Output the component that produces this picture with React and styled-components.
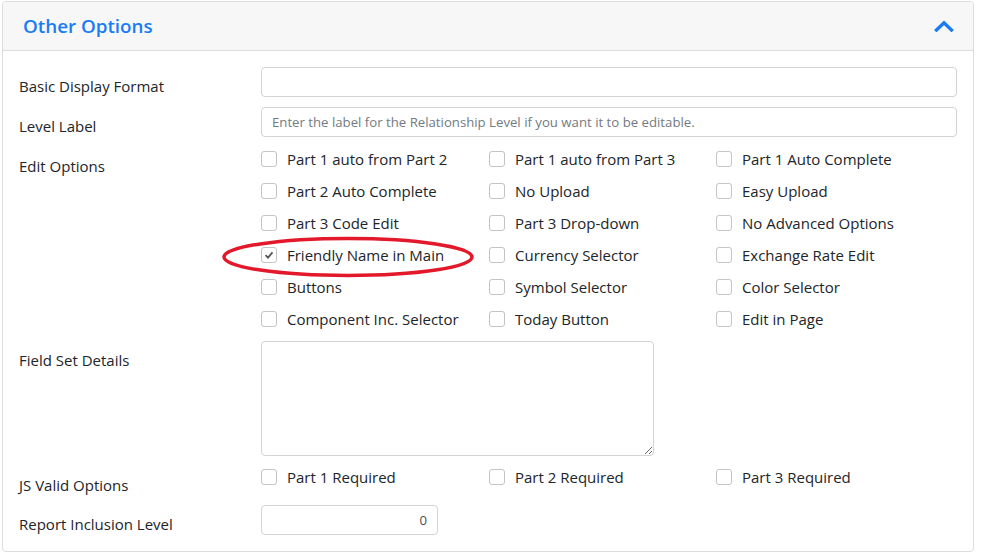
import React from 'react';
import styled, { createGlobalStyle } from 'styled-components';

const GlobalStyle = createGlobalStyle`
  html, body {
    margin:0;
    padding:0;
    background:#fff;
  }
  body {
    font-family:"Open Sans", "Noto Sans", Arial, sans-serif;
    color:#212529;
  }
  * { box-sizing:border-box; }
`;

const Page = styled.div`
  padding:1px 7px 0 2px;
`;

const Card = styled.section`
  border:1px solid #dcdcdc;
  border-radius:4px;
  background:#fff;
`;

const Header = styled.div`
  display:flex;
  align-items:center;
  justify-content:space-between;
  height:49px;
  padding:0 19px 0 20px;
  background:#f7f7f7;
  border-bottom:1px solid #dcdcdc;
  border-radius:4px 4px 0 0;
`;

const Title = styled.h2`
  margin:0;
  font-size:18.8px;
  font-weight:600;
  color:#1a7cf4;
`;

const Toggle = styled.button`
  border:none;
  background:none;
  padding:0;
  display:flex;
  cursor:pointer;
`;

const Body = styled.div`
  padding:16px 16px 16px 16px;
`;

const Row = styled.div`
  display:grid;
  grid-template-columns:242px 1fr;
  align-items:start;
  margin-bottom:${(p) => p.mb ?? 10}px;
`;

const Label = styled.label`
  padding-top:8px;
  font-size:15px;
  line-height:22px;
`;

const TextInput = styled.input`
  display:block;
  width:${(p) => p.w || '100%'};
  height:30px;
  border:1px solid #d3d3d3;
  border-radius:4px;
  padding:0 10px;
  font-family:inherit;
  font-size:13.2px;
  color:#495057;
  text-align:${(p) => (p.right ? 'right' : 'left')};
  outline:none;
  &::placeholder {
    color:#737b82;
  }
`;

const TextArea = styled.textarea`
  display:block;
  width:393px;
  height:115px;
  border:1px solid #d3d3d3;
  border-radius:4px;
  padding:6px 10px;
  font-family:inherit;
  font-size:13px;
  outline:none;
`;

const CheckGrid = styled.div`
  display:grid;
  grid-template-columns:228px 227px 227px;
  row-gap:10px;
  padding:${(p) => (p.pad ? '1px 0' : '0')};
`;

const CheckItem = styled.label`
  position:relative;
  display:flex;
  align-items:center;
  gap:10px;
  height:22px;
  font-size:15px;
  white-space:nowrap;
  cursor:pointer;
`;

const Box = styled.span`
  flex:none;
  width:16px;
  height:16px;
  border:1px solid #c4c4c4;
  border-radius:3px;
  background:#fff;
  display:flex;
  align-items:center;
  justify-content:center;
`;

const Marker = styled.svg`
  position:absolute;
  left:-40px;
  top:-8px;
  pointer-events:none;
  overflow:visible;
`;

const Check = ({ label, checked, circled }) => (
  <CheckItem>
    <Box>
      {checked && (
        <svg width="10" height="10" viewBox="0 0 10 10">
          <path d="M1.5 5.2 L4 7.6 L8.5 2.4" fill="none" stroke="#555" strokeWidth="1.8" />
        </svg>
      )}
    </Box>
    {label}
    {circled && (
      <Marker width="254" height="42" viewBox="0 0 254 42">
        <ellipse cx="127" cy="21" rx="124" ry="18.5" fill="none" stroke="#e3192b" strokeWidth="3.5" />
      </Marker>
    )}
  </CheckItem>
);

const editOptions = [
  'Part 1 auto from Part 2', 'Part 1 auto from Part 3', 'Part 1 Auto Complete',
  'Part 2 Auto Complete', 'No Upload', 'Easy Upload',
  'Part 3 Code Edit', 'Part 3 Drop-down', 'No Advanced Options',
  'Friendly Name in Main', 'Currency Selector', 'Exchange Rate Edit',
  'Buttons', 'Symbol Selector', 'Color Selector',
  'Component Inc. Selector', 'Today Button', 'Edit in Page',
];

const jsOptions = ['Part 1 Required', 'Part 2 Required', 'Part 3 Required'];

export default function App() {
  return (
    <Page>
      <GlobalStyle />
      <Card>
        <Header>
          <Title>Other Options</Title>
          <Toggle aria-label="Collapse">
            <svg width="20" height="12" viewBox="0 0 20 12">
              <path d="M2.5 10 L10 2.8 L17.5 10" fill="none" stroke="#1a7cf4" strokeWidth="3.4" strokeLinecap="square" />
            </svg>
          </Toggle>
        </Header>
        <Body>
          <Row>
            <Label>Basic Display Format</Label>
            <TextInput type="text" />
          </Row>
          <Row>
            <Label>Level Label</Label>
            <TextInput type="text" placeholder="Enter the label for the Relationship Level if you want it to be editable." />
          </Row>
          <Row>
            <Label>Edit Options</Label>
            <CheckGrid pad>
              {editOptions.map((o) => (
                <Check
                  key={o}
                  label={o}
                  checked={o === 'Friendly Name in Main'}
                  circled={o === 'Friendly Name in Main'}
                />
              ))}
            </CheckGrid>
          </Row>
          <Row>
            <Label>Field Set Details</Label>
            <TextArea />
          </Row>
          <Row mb={9}>
            <Label>JS Valid Options</Label>
            <CheckGrid>
              {jsOptions.map((o) => (
                <Check key={o} label={o} />
              ))}
            </CheckGrid>
          </Row>
          <Row mb={0}>
            <Label>Report Inclusion Level</Label>
            <TextInput type="text" defaultValue="0" w="177px" right />
          </Row>
        </Body>
      </Card>
    </Page>
  );
}
